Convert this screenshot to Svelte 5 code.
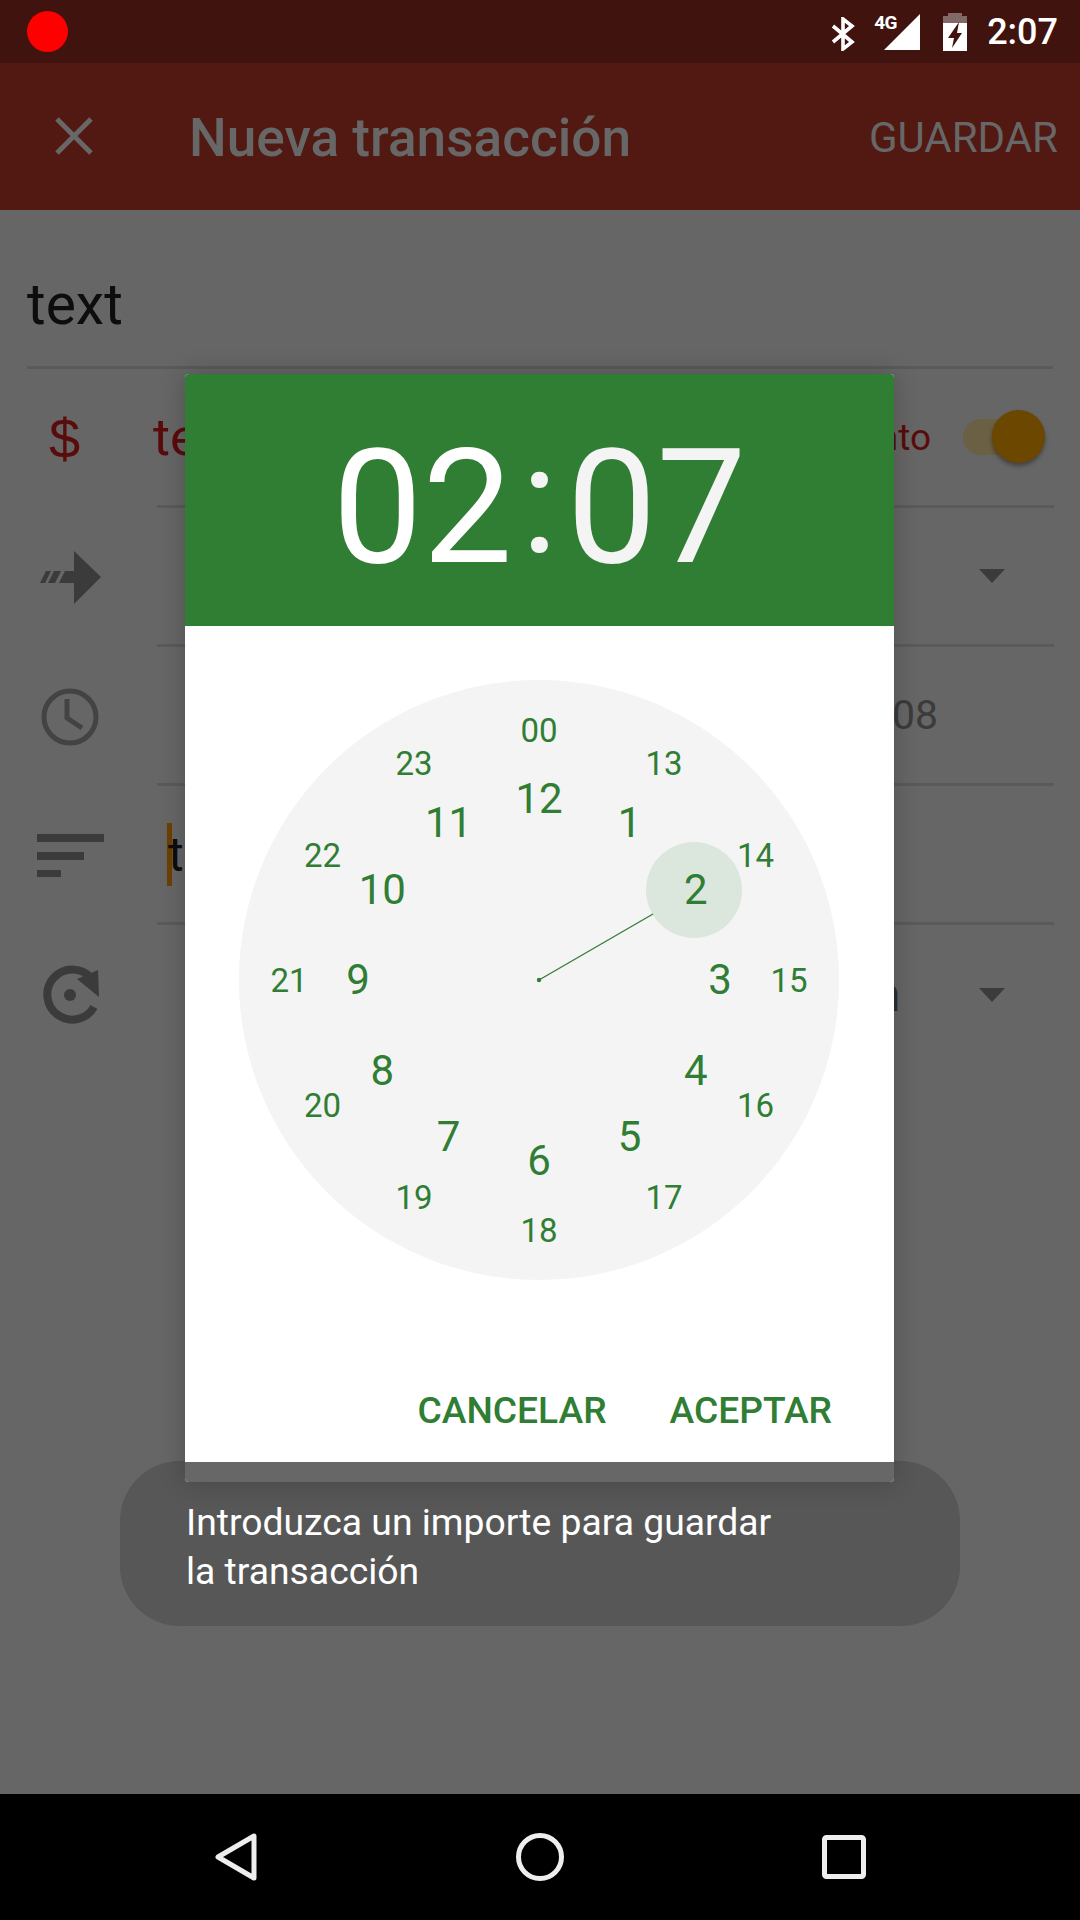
<script>
  const cx = 300, cy = 300;
  function place(n, i, r) {
    const a = (i * Math.PI) / 6;
    return { n, x: cx + r * Math.sin(a), y: cy - r * Math.cos(a) };
  }
  const inner = [12, 1, 2, 3, 4, 5, 6, 7, 8, 9, 10, 11].map((n, i) => place(n, i, 181));
  const outer = ['00', 13, 14, 15, 16, 17, 18, 19, 20, 21, 22, 23].map((n, i) => place(n, i, 250));
</script>

<div class="page">
  <header class="status">
    <span class="rec"></span>
    <div class="status-right">
      <svg class="bt" width="24" height="34" viewBox="0 0 24 34"><path d="M2 9 L21 25 L12 32 V2 L21 9 L2 25" fill="none" stroke="#fff" stroke-width="3.600"/></svg>
      <div class="signal">
        <span class="net">4G</span>
        <svg width="38" height="38" viewBox="0 0 38 38"><path d="M37 1 V37 H1 Z" fill="#fff"/></svg>
      </div>
      <svg class="batt" width="24" height="38" viewBox="0 0 24 38"><path d="M5 0 H19 V3 H24 V10 H0 V3 H5 Z" fill="#826866"/><path d="M0 10 H24 V38 H0 Z" fill="#fff"/><path d="M16 9 L5 25 H11 L9 35 L19 20 H14 Z" fill="#40130e"/></svg>
      <span class="clock-time">2:07</span>
    </div>
  </header>

  <div class="appbar">
    <svg class="close" width="38" height="38" viewBox="0 0 38 38"><path d="M2 2 L36 36 M36 2 L2 36" stroke="#676767" stroke-width="5"/></svg>
    <h1>Nueva transacción</h1>
    <span class="save">GUARDAR</span>
  </div>

  <main class="form">
    <div class="title-field">text</div>

    <div class="row">
      <div class="row-icon"><span class="dollar">$</span></div>
      <div class="row-body">
        <span class="amount">text</span>
        <div class="toggle-wrap">
          <span class="kind">nto</span>
          <span class="switch"><span class="thumb"></span></span>
        </div>
      </div>
    </div>

    <div class="row">
      <div class="row-icon">
        <svg width="64" height="54" viewBox="0 0 64 54"><path d="M37 0 L64 26 L37 53 V32 H22 L28 20 H37 Z M3 32 L9 20 H14 L8 32 Z M11 32 L17 20 H24 L18 32 Z" fill="#3b3b3b"/></svg>
      </div>
      <div class="row-body"><span></span><span class="caret"></span></div>
    </div>

    <div class="row">
      <div class="row-icon shift">
        <svg width="58" height="58" viewBox="0 0 58 58"><circle cx="29" cy="29" r="26" fill="none" stroke="#434343" stroke-width="5"/><path d="M26 11 V30 L41 40" fill="none" stroke="#434343" stroke-width="5"/></svg>
      </div>
      <div class="row-body"><span></span><span class="date">08</span></div>
    </div>

    <div class="row">
      <div class="row-icon">
        <svg width="68" height="44" viewBox="0 0 68 44"><path d="M0 0 H67 V8 H0 Z M0 18 H47 V26 H0 Z M0 36 H24 V43 H0 Z" fill="#3b3b3b"/></svg>
      </div>
      <div class="row-body note"><span class="cursor"></span><span class="note-text">text</span></div>
    </div>

    <div class="row last">
      <div class="row-icon shift">
        <svg width="60" height="60" viewBox="0 0 60 60"><path d="M50 13 A25 25 0 1 0 53 42" fill="none" stroke="#3b3b3b" stroke-width="8"/><path d="M36 14 L57 5 L58 32 Z" fill="#3b3b3b"/><circle cx="29" cy="30" r="6" fill="#3b3b3b"/></svg>
      </div>
      <div class="row-body end"><span class="cut">n</span><span class="caret"></span></div>
    </div>
  </main>

  <nav class="nav">
    <svg width="42" height="48" viewBox="0 0 42 48"><path d="M39 3 V45 L3 24 Z" fill="none" stroke="#eee" stroke-width="5" stroke-linejoin="round"/></svg>
    <svg width="48" height="48" viewBox="0 0 48 48"><circle cx="24" cy="24" r="21.500" fill="none" stroke="#eee" stroke-width="5"/></svg>
    <svg width="44" height="44" viewBox="0 0 44 44"><rect x="2.500" y="2.500" width="39" height="39" rx="2" fill="none" stroke="#eee" stroke-width="5"/></svg>
  </nav>

  <div class="toast">Introduzca un importe para guardar<br />la transacción</div>

  <section class="dialog">
    <div class="time">
      <span>02</span><span class="colon">:</span><span class="mins">07</span>
    </div>
    <div class="body">
      <div class="face">
        <svg class="hand" width="600" height="600" viewBox="0 0 600 600">
          <circle cx="455" cy="210" r="48" fill="#dbe6dc"/>
          <line x1="300" y1="300" x2="414" y2="234" stroke="#307d34" stroke-width="1.300"/>
          <circle cx="300" cy="300" r="2.200" fill="#307d34"/>
        </svg>
        {#each inner as t}
          <span class="num big" style="left:{t.x}px;top:{t.y}px">{t.n}</span>
        {/each}
        {#each outer as t}
          <span class="num small" style="left:{t.x}px;top:{t.y}px">{t.n}</span>
        {/each}
      </div>
    </div>
    <div class="actions">
      <span>CANCELAR</span>
      <span>ACEPTAR</span>
    </div>
    <div class="strip"></div>
  </section>
</div>

<style>
  :global(body) { margin: 0; background: #666; }
  .page {
    position: relative;
    width: 1080px;
    height: 1920px;
    overflow: hidden;
    display: flex;
    flex-direction: column;
    background: #666;
    font-family: Roboto, sans-serif;
  }
  .status {
    height: 63px;
    background: #40130e;
    display: flex;
    align-items: center;
    justify-content: space-between;
    padding: 0 22px 0 27px;
    flex: none;
  }
  .rec { width: 41px; height: 41px; border-radius: 50%; background: #f00; }
  .status-right { display: flex; align-items: center; }
  .bt { margin-right: 28px; margin-top: 4px; }
  .signal { position: relative; width: 38px; height: 38px; margin-right: 22px; }
  .signal svg { display: block; }
  .net {
    position: absolute;
    left: -9px;
    top: 1px;
    font-size: 19px;
    font-weight: 700;
    color: #fff;
    line-height: 17px;
    letter-spacing: -0.5px;
  }
  .clock-time { color: #fff; font-size: 36px; font-weight: 500; margin-left: 20px; line-height: 38px; }
  .appbar {
    height: 147px;
    background: #521912;
    display: flex;
    align-items: center;
    flex: none;
    color: #676767;
  }
  .close { margin-left: 55px; margin-top: -1px; }
  h1 { margin: 4px 0 0 96px; font-size: 53.200px; font-weight: 500; line-height: 1; white-space: nowrap; }
  .save { margin-left: auto; margin-right: 22px; font-size: 42px; margin-top: 2px; }

  .form { flex: 1; padding-top: 0; }
  .title-field {
    height: 159px;
    margin: 0 27px;
    box-sizing: border-box;
    border-bottom: 3px solid #5a5a5a;
    font-size: 57px;
    color: #0d0d0d;
    line-height: 60px;
    padding-top: 65px;
  }
  .row { display: flex; height: 139px; }
  .row-icon { width: 157px; flex: none; padding-left: 37px; box-sizing: border-box; display: flex; align-items: center; }
  .row-icon.shift { padding-left: 41px; }
  .row-body {
    flex: 1;
    margin-right: 26px;
    border-bottom: 3px solid #5a5a5a;
    display: flex;
    align-items: center;
    justify-content: space-between;
    box-sizing: border-box;
  }
  .row.last .row-body { border-bottom: none; }
  .dollar { color: #5a0b0b; font-size: 56px; margin-left: 12px; font-family: "Liberation Sans", sans-serif; line-height: 1; }
  .amount { color: #5a0b0b; font-size: 52px; margin-left: -4px; }
  .toggle-wrap { display: flex; align-items: center; }
  .kind { color: #5a0b0b; font-size: 37px; margin-right: 32px; }
  .switch { position: relative; width: 67px; height: 36px; border-radius: 18px; background: #6b5f44; margin-right: 24px; }
  .thumb {
    position: absolute;
    right: -15px;
    top: -9px;
    width: 53px;
    height: 53px;
    border-radius: 50%;
    background: #6b4700;
    box-shadow: 0 3px 4px rgba(0, 0, 0, 0.35);
  }
  .caret {
    width: 0;
    height: 0;
    border-left: 13px solid transparent;
    border-right: 13px solid transparent;
    border-top: 14px solid #3b3b3b;
    margin-right: 49px;
  }
  .date { color: #3b3b3b; font-size: 41px; margin-right: 116px; }
  .note { justify-content: flex-start; padding-left: 10px; }
  .cursor { width: 5px; height: 63px; background: #6b4100; }
  .note-text { font-size: 48px; color: #0d0d0d; margin-left: -4px; }
  .end .cut { color: #2f2f2f; font-size: 48px; margin-left: 717px; }
  .nav {
    height: 126px;
    background: #000;
    flex: none;
    display: flex;
    align-items: center;
    padding-left: 215px;
    gap: 0;
  }
  .nav svg:nth-child(2) { margin-left: 259px; }
  .nav svg:nth-child(3) { margin-left: 258px; }

  .toast {
    position: absolute;
    left: 120px;
    top: 1461px;
    width: 840px;
    height: 165px;
    box-sizing: border-box;
    background: #575757;
    border-radius: 60px;
    color: #fff;
    font-size: 37.300px;
    line-height: 49px;
    padding: 37px 0 0 66px;
    z-index: 1;
    white-space: nowrap;
  }
  .dialog {
    position: absolute;
    left: 185px;
    top: 374px;
    width: 709px;
    height: 1108px;
    z-index: 2;
    display: flex;
    flex-direction: column;
    background: #fff;
    border-radius: 4px;
    box-shadow: 0 0 26px rgba(0, 0, 0, 0.22);
  }
  .time {
    height: 252px;
    background: #307d34;
    border-radius: 4px 4px 0 0;
    color: #fff;
    font-size: 160px;
    display: flex;
    align-items: center;
    justify-content: center;
    line-height: 1;
    padding-top: 16px;
    box-sizing: border-box;
    flex: none;
  }
  .colon { margin: -14px 9px 0; font-size: 150px; color: #f4f4f4; }
  .mins { color: #f4f4f4; }
  .body { height: 706px; flex: none; padding: 54px 0 0 54px; box-sizing: border-box; display: flex; }
  .face {
    position: relative;
    width: 600px;
    height: 600px;
    border-radius: 50%;
    background: #f4f4f4;
    flex: none;
  }
  .hand { position: absolute; left: 0; top: 0; }
  .num {
    position: absolute;
    transform: translate(-50%, -50%);
    color: #307d34;
    line-height: 1;
  }
  .big { font-size: 42px; }
  .small { font-size: 33px; }
  .actions {
    flex: none;
    display: flex;
    justify-content: flex-end;
    gap: 63px;
    padding-right: 62px;
    align-items: flex-start;
    box-sizing: border-box;
    color: #307d34;
    font-size: 37.200px;
    font-weight: 500;
  }
  .actions span { margin-top: 60px; line-height: 1; }
  .strip { position: absolute; left: 0; right: 0; bottom: 0; height: 20px; background: #676767; border-radius: 0 0 4px 4px; }
</style>
